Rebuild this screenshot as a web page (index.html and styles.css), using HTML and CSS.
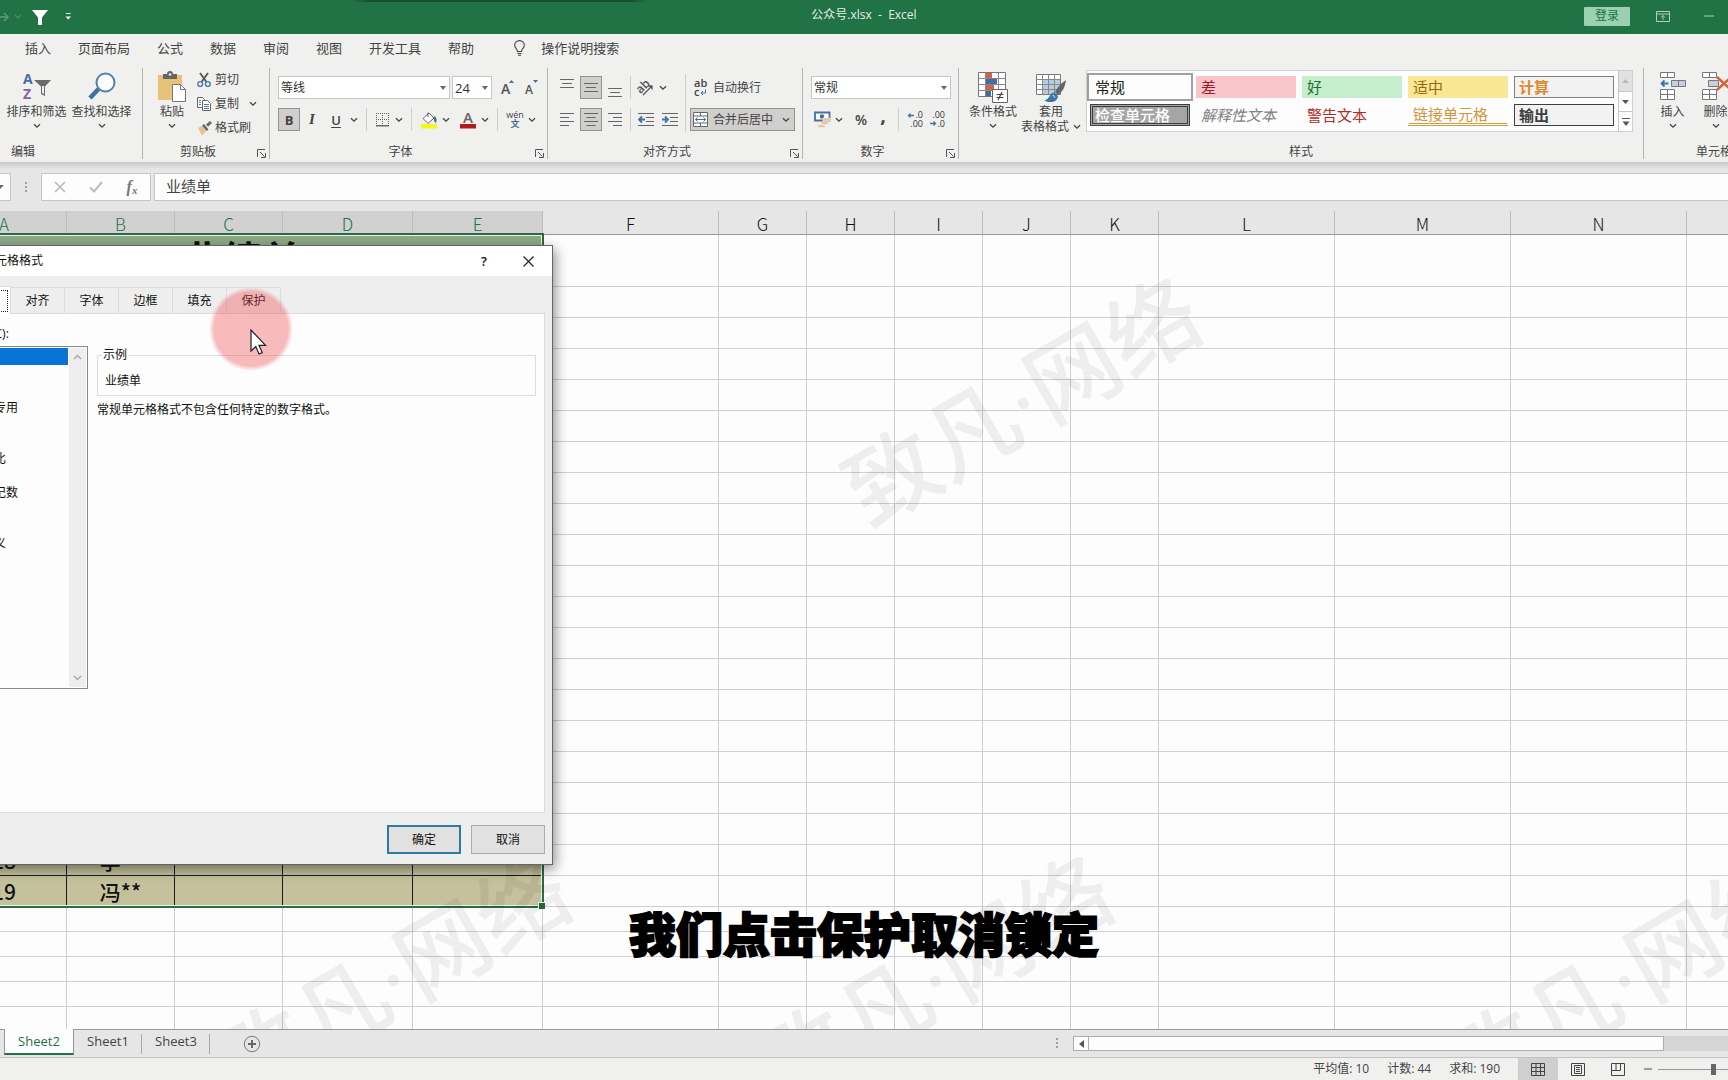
FILE: index.html
```html
<!DOCTYPE html>
<html lang="zh-CN">
<head>
<meta charset="utf-8">
<meta name="viewport" content="width=device-width, initial-scale=1">
<title>公众号.xlsx - Excel</title>
<link rel="stylesheet" href="styles.css">
</head>
<body>
<svg class="defs" aria-hidden="true">
  <symbol id="chev" viewBox="0 0 8 6"><path d="M1 1.2 4 4.2 7 1.2" fill="none" stroke="#444" stroke-width="1.3"/></symbol>
  <symbol id="launch" viewBox="0 0 9 9"><path d="M.5 8V.5H8M3 3l4.500 4.500M8.500 4v4.500H4" fill="none" stroke="#555"/></symbol>
</svg>

<header class="titlebar">
  <div class="quick">
    <button class="redo" aria-label="恢复"><svg width="9" height="10"><path d="M0 5h7M4 1l4 4-4 4" fill="none" stroke="#5d9a79" stroke-width="1.500"/></svg></button>
    <button class="redo-more" aria-label="恢复选项"><svg width="8" height="6"><path d="M1 1l3 3 3-3" fill="none" stroke="#4b8c69" stroke-width="1.300"/></svg></button>
    <button class="funnel" aria-label="筛选"><svg width="16" height="15"><path d="M0 0h16L10 7.500V15H6V7.500z" fill="#fff"/></svg></button>
    <button class="custom" aria-label="自定义快速访问工具栏"><svg width="7" height="8"><path d="M1 .5h4.500" stroke="#fff"/><path d="M.5 3.500h5.500L3.200 6.500z" fill="#fff"/></svg></button>
  </div>
  <h1 class="doc-title">公众号.xlsx&nbsp; -&nbsp; Excel</h1>
  <div class="window-tools">
    <button class="login">登录</button>
    <button class="win-btn" aria-label="功能区显示选项"><svg width="14" height="11"><path d="M.5.5h13v10H.5zM.5 3h13M7 9V4.500M5 6.500l2-2 2 2" fill="none" stroke="#a9d3ba"/></svg></button>
    <button class="win-btn" aria-label="最小化"><svg width="10" height="2"><path d="M0 1h10" stroke="#a9d3ba"/></svg></button>
  </div>
</header>

<nav class="tabs">
  <a href="#">插入</a><a href="#">页面布局</a><a href="#">公式</a><a href="#">数据</a><a href="#">审阅</a><a href="#">视图</a><a href="#">开发工具</a><a href="#">帮助</a>
  <a href="#" class="tell-me"><svg width="11" height="16"><path d="M3.500 11.500C3.500 9 .7 8.300.7 5.200a4.800 4.600 0 0 1 9.600 0c0 3.100-2.800 3.800-2.800 6.300zM3.500 13.500h4M4 15.300h3" fill="none" stroke="#444" stroke-width="1.100"/></svg>操作说明搜索</a>
</nav>

<section class="ribbon" aria-label="功能区">
  <div class="group g-edit">
    <div class="tools">
      <button class="big wide">
        <svg width="30" height="30"><text x="1" y="12" font-size="14" font-weight="700" fill="#44709c">A</text><text x="1" y="27" font-size="14" font-weight="700" fill="#8a5fa5">Z</text><path d="M12 8h17l-6.500 7v7.500h-3V15z" fill="#6b6b6b"/><path d="M20 14v7l2 1v-8" fill="#f0f1ef"/><path d="M19.500 14.500v7l3 2v-9" fill="none" stroke="#6b6b6b"/></svg>
        <span>排序和筛选</span><svg class="chev"><use href="#chev"/></svg>
      </button>
      <button class="big wide">
        <svg width="30" height="30"><path d="M11.500 17 3 26" stroke="#44709c" stroke-width="4.500"/><circle cx="18.500" cy="10.500" r="9" fill="#fdfdfd" stroke="#5580a8" stroke-width="2"/></svg>
        <span>查找和选择</span><svg class="chev"><use href="#chev"/></svg>
      </button>
    </div>
    <footer><span>编辑</span></footer>
  </div>

  <div class="group g-clip">
    <div class="tools">
      <button class="big paste">
        <svg width="30" height="32"><path d="M1 3h24v25H1z" fill="#e8c27b"/><path d="M6 2h4a3 3 0 0 1 6 0h4v5H6z" fill="#666"/><circle cx="13" cy="2.500" r="1.300" fill="#f0f1ef"/><path d="M15.500 12.500h8l5 5v12h-13z" fill="#fff" stroke="#777"/><path d="M23.500 12.500v5h5" fill="none" stroke="#777"/></svg>
        <span>粘贴</span><svg class="chev"><use href="#chev"/></svg>
      </button>
      <div class="stack">
        <button><svg width="16" height="16"><path d="M4 1l6.500 9M12 1 5.500 10" stroke="#555" stroke-width="1.800"/><circle cx="4.200" cy="12" r="2.400" fill="none" stroke="#4a78a8" stroke-width="1.400"/><circle cx="11.800" cy="12" r="2.400" fill="none" stroke="#4a78a8" stroke-width="1.400"/></svg>剪切</button>
        <button><svg width="16" height="16"><path d="M1.500 1.500h5l2 2v8h-7z" fill="#fff" stroke="#666"/><path d="M6.500 4.500h5l3 3v7h-8z" fill="#fff" stroke="#666"/><path d="M3 4.500h2M3 6.500h2M3 8.500h2M8 8.500h5M8 10.500h5M8 12.500h5" stroke="#4a78a8"/></svg>复制<svg class="chev"><use href="#chev"/></svg></button>
        <button><svg width="16" height="16"><path d="M2 8l4-2 4 5-4 4.500z" fill="#ecc088"/><path d="M6 5.500 8 4l4.500 5.500-2 1.500zM10 4.500l4-3.500 2 2-4 3.800z" fill="#666"/></svg>格式刷</button>
      </div>
    </div>
    <footer><span>剪贴板</span><button class="launch" aria-label="剪贴板设置"><svg width="9" height="9"><use href="#launch"/></svg></button></footer>
  </div>

  <div class="group g-font">
    <div class="rows">
      <div class="row">
        <span class="combo family"><select aria-label="字体"><option>等线</option></select></span>
        <span class="combo size"><select aria-label="字号"><option>24</option></select></span>
        <button class="ib grow" aria-label="增大字号"><svg width="16" height="18"><text x="2" y="15" font-size="14" font-weight="600" fill="#555">A</text><path d="M10 4l2.500-3L15 4z" fill="#44709c"/></svg></button>
        <button class="ib" aria-label="减小字号"><svg width="16" height="18"><text x="2" y="15" font-size="12" font-weight="600" fill="#555">A</text><path d="M10 1h5l-2.500 3z" fill="#44709c"/></svg></button>
      </div>
      <div class="row">
        <button class="ib on bold">B</button><button class="ib w24 italic">I</button><button class="ib w24 under">U</button><button class="dd" aria-label="下划线选项"><svg class="chev"><use href="#chev"/></svg></button>
        <i class="sep"></i>
        <button class="ib w20" aria-label="边框"><svg width="14" height="14"><path d="M0 .5h13M0 6.500h13M.5 0v13M6.500 0v13M12.500 0v13" stroke="#666" stroke-dasharray="1 1"/><path d="M0 12.800h13" stroke="#555" stroke-width="1.300"/></svg></button><button class="dd" aria-label="边框选项"><svg class="chev"><use href="#chev"/></svg></button>
        <i class="sep"></i>
        <button class="ib" aria-label="填充颜色"><svg width="17" height="18"><path d="M2 7.500 8 2l5 5-6 5.500z" fill="#fff" stroke="#666"/><path d="M7 6V1.500" stroke="#666"/><path d="M13 5c3 1.500 3 4 2 7-2-1-2.500-3-2-7z" fill="#44709c"/><path d="M0 13h16v4.500H0z" fill="#f7f51e"/></svg></button><button class="dd" aria-label="填充颜色选项"><svg class="chev"><use href="#chev"/></svg></button>
        <button class="ib color" aria-label="字体颜色"><svg width="16" height="18"><text x="3" y="11.500" font-size="15" font-weight="600" fill="#666">A</text><path d="M0 13h16v4.500H0z" fill="#b4191e"/></svg></button><button class="dd" aria-label="字体颜色选项"><svg class="chev"><use href="#chev"/></svg></button>
        <i class="sep"></i>
        <button class="ib" aria-label="拼音"><svg width="18" height="20"><text x="9" y="8" font-size="9" text-anchor="middle" fill="#444">wén</text><text x="9" y="17" font-size="9" font-weight="700" text-anchor="middle" fill="#44709c">文</text></svg></button><button class="dd" aria-label="拼音选项"><svg class="chev"><use href="#chev"/></svg></button>
      </div>
    </div>
    <footer><span>字体</span><button class="launch" aria-label="字体设置"><svg width="9" height="9"><use href="#launch"/></svg></button></footer>
  </div>

  <div class="group g-align">
    <div class="cols">
      <div class="rows">
        <div class="row gap2">
          <button class="ib" aria-label="顶端对齐"><svg width="14" height="20"><path d="M0 1.500h14M2 5.500h10M0 9.500h14" stroke="#666"/></svg></button>
          <button class="ib on" aria-label="垂直居中"><svg width="14" height="20"><path d="M0 5.500h14M2 9.500h10M0 13.500h14" stroke="#666"/></svg></button>
          <button class="ib" aria-label="底端对齐"><svg width="14" height="20"><path d="M0 10.500h14M2 14.500h10M0 18.500h14" stroke="#666"/></svg></button>
          <i class="sep tight"></i>
          <button class="ib" aria-label="方向"><svg width="18" height="18"><text x="0" y="11" font-size="12" font-weight="600" fill="#555" transform="rotate(-45 7 9)">ab</text><path d="M6 16 15 7M11.500 7H15v3.500" fill="none" stroke="#555" stroke-width="1.300"/></svg></button><button class="dd snug" aria-label="方向选项"><svg class="chev"><use href="#chev"/></svg></button>
        </div>
        <div class="row gap2">
          <button class="ib" aria-label="左对齐"><svg width="14" height="14"><path d="M0 .5h14M0 4.500h9M0 8.500h14M0 12.500h9" stroke="#666"/></svg></button>
          <button class="ib on" aria-label="居中"><svg width="14" height="14"><path d="M0 .5h14M2.500 4.500h9M0 8.500h14M2.500 12.500h9" stroke="#666"/></svg></button>
          <button class="ib" aria-label="右对齐"><svg width="14" height="14"><path d="M0 .5h14M5 4.500h9M0 8.500h14M5 12.500h9" stroke="#666"/></svg></button>
          <i class="sep tight"></i>
          <button class="ib" aria-label="减少缩进量"><svg width="16" height="14"><path d="M0 .5h16M8 4.500h8M8 8.500h8M0 12.500h16" stroke="#666"/><path d="M7 6.500H1.500M4 3.500l-3 3 3 3" fill="none" stroke="#3f74a6" stroke-width="1.800"/></svg></button>
          <button class="ib" aria-label="增加缩进量"><svg width="16" height="14"><path d="M0 .5h16M8 4.500h8M8 8.500h8M0 12.500h16" stroke="#666"/><path d="M0 6.500h5.500M3 3.500l3 3-3 3" fill="none" stroke="#3f74a6" stroke-width="1.800"/></svg></button>
        </div>
      </div>
      <i class="sep tall"></i>
      <div class="rows">
        <button class="labeled"><svg width="15" height="18"><text x="1" y="8" font-size="11" font-weight="600" fill="#444">ab</text><text x="1" y="17" font-size="11" font-weight="600" fill="#444">c</text><path d="M12.500 10.500V14H8M10 12l-2 2 2 2" fill="none" stroke="#44709c"/></svg>自动换行</button>
        <button class="labeled on"><svg width="15" height="15"><path d="M.5.5h14v14H.5z" fill="#fff" stroke="#666"/><path d="M.5 4h14M.5 11h14M7.500.5V4M7.500 11v3.500" stroke="#666"/><path d="M2.500 7.500h10M4.500 5.500l-2 2 2 2M10.500 5.500l2 2-2 2" fill="none" stroke="#44709c"/></svg>合并后居中<svg class="chev"><use href="#chev"/></svg></button>
      </div>
    </div>
    <footer><span>对齐方式</span><button class="launch" aria-label="对齐设置"><svg width="9" height="9"><use href="#launch"/></svg></button></footer>
  </div>

  <div class="group g-num">
    <div class="rows">
      <div class="row"><span class="combo numfmt"><select aria-label="数字格式"><option>常规</option></select></span></div>
      <div class="row">
        <button class="ib" aria-label="会计数字格式"><svg width="17" height="17"><path d="M1 1.500h14.500v8H1z" fill="#fff" stroke="#44709c" stroke-width="1.800"/><circle cx="8" cy="5.500" r="2.200" fill="#44709c"/><path d="M9 7h7v3H9zM7 11h7v2.500H7zM4 14h7v2.500H4z" fill="#ecc088" stroke="#f0f1ef" stroke-width=".6"/></svg></button><button class="dd" aria-label="会计格式选项"><svg class="chev"><use href="#chev"/></svg></button>
        <button class="ib pct color">%</button><button class="ib comma">,</button>
        <i class="sep tight"></i>
        <button class="ib" aria-label="增加小数位数"><svg width="18" height="18"><text x="17" y="7" font-size="9" text-anchor="end" fill="#333">.0</text><text x="17" y="16" font-size="9" text-anchor="end" fill="#333">.00</text><path d="M8 4.500H2.500M4.500 2.500l-2 2 2 2" fill="none" stroke="#3f74a6" stroke-width="1.300"/></svg></button>
        <button class="ib" aria-label="减少小数位数"><svg width="18" height="18"><text x="17" y="7" font-size="9" text-anchor="end" fill="#333">.00</text><text x="17" y="16" font-size="9" text-anchor="end" fill="#333">.0</text><path d="M2 12.500h5.500M5.500 10.500l2 2-2 2" fill="none" stroke="#3f74a6" stroke-width="1.300"/></svg></button>
      </div>
    </div>
    <footer><span>数字</span><button class="launch" aria-label="数字设置"><svg width="9" height="9"><use href="#launch"/></svg></button></footer>
  </div>

  <div class="group g-style">
    <div class="tools">
      <button class="big cond">
        <svg width="30" height="31"><path d="M.5.5h27v24H.5z" fill="#fff" stroke="#777"/><path d="M8 1h6v5H8zM8 13h8v5H8z" fill="#d0604f"/><path d="M8 7h11v5H8zM8 19h5v5H8z" fill="#3f6fa0"/><path d="M.5 6.500h27M.5 12.500h27M.5 18.500h27M7.500.5v24M20.500.5v24" stroke="#888"/><path d="M14.500 17.500h15v13h-15z" fill="#fff" stroke="#666"/><path d="M18.500 22.500h7M18.500 25.500h7M24 20l-4 8" stroke="#444" stroke-width="1.200"/></svg>
        <span>条件格式</span><svg class="chev"><use href="#chev"/></svg>
      </button>
      <button class="big fmt">
        <svg width="30" height="31"><path d="M.5 2.500h24v20H.5z" fill="#fff" stroke="#777"/><path d="M7 8h17v14H7z" fill="#b6cbe0"/><path d="M.5 7.500h24M.5 12.500h24M.5 17.500h24M6.500 2.500v20M12.500 2.500v20M18.500 2.500v20" stroke="#888"/><path d="M30 8c-6 4-9 8-11 12l3 3c4-3 7-7 8-15z" fill="#666"/><path d="M18.500 20.500c-5 0-4 6-10 8 5 3 13 2 13.500-4.500z" fill="#3f74a6"/><path d="M17 23l2 2.500" stroke="#fff"/></svg>
        <span>套用</span><span class="line2">表格格式<svg class="chev"><use href="#chev"/></svg></span>
      </button>
      <div class="gallery">
        <div class="swatches">
          <button class="sw normal">常规</button><button class="sw bad">差</button><button class="sw good">好</button><button class="sw neutral">适中</button><button class="sw calc">计算</button>
          <button class="sw check">检查单元格</button><button class="sw explain">解释性文本</button><button class="sw warn">警告文本</button><button class="sw linked">链接单元格</button><button class="sw output">输出</button>
        </div>
        <div class="gscroll">
          <button disabled aria-label="上一行"><svg width="7" height="4"><path d="M0 4l3.500-4L7 4z" fill="#bbb"/></svg></button>
          <button aria-label="下一行"><svg width="7" height="4"><path d="M0 0h7L3.500 4z" fill="#555"/></svg></button>
          <button aria-label="其他样式"><svg width="8" height="8"><path d="M0 .5h8" stroke="#555"/><path d="M.5 3.500h7L4 8z" fill="#555"/></svg></button>
        </div>
      </div>
    </div>
    <footer><span>样式</span></footer>
  </div>

  <div class="group g-cells">
    <div class="tools">
      <button class="big cell">
        <svg width="28" height="29"><path d="M1.500.5h14v5h-14zM8.500.5v5M1.500 17.500h14v10h-14zM1.500 22.500h14M8.500 17.500v10" fill="#fff" stroke="#777"/><path d="M12.500 8.500h14v6h-14zM19.500 8.500v6" fill="#c3d0de" stroke="#777"/><path d="M9.500 11.500H3M5.500 8.500l-3 3 3 3" fill="none" stroke="#3f74a6" stroke-width="1.800"/></svg>
        <span>插入</span><svg class="chev"><use href="#chev"/></svg>
      </button>
      <button class="big cell">
        <svg width="30" height="29"><path d="M1.500.5h14v5h-14zM8.500.5v5M1.500 17.500h14v10h-14zM1.500 22.500h14M8.500 17.500v10" fill="#fff" stroke="#777"/><path d="M7.500 8.500h10v6h-10z" fill="#c3d0de" stroke="#777"/><path d="M16 5l14 13M30 5 16 18" stroke="#d8603c" stroke-width="2.400"/></svg>
        <span>删除</span><svg class="chev"><use href="#chev"/></svg>
      </button>
    </div>
    <footer><span>单元格</span></footer>
  </div>
</section>

<section class="formula-bar">
  <button class="namebox" aria-label="名称框列表"><svg width="7" height="5"><path d="M0 0h7L3 4z" fill="#666"/></svg></button>
  <i class="grip"></i>
  <div class="fbtns">
    <button aria-label="取消"><svg width="12" height="12"><path d="M1 1l10 10M11 1 1 11" stroke="#bbb" stroke-width="1.700"/></svg></button>
    <button aria-label="输入"><svg width="14" height="12"><path d="M1 6.500 5 10.500 13 1" fill="none" stroke="#bbb" stroke-width="2"/></svg></button>
    <button class="fx" aria-label="插入函数">f<sub>x</sub></button>
  </div>
  <input class="formula" aria-label="编辑栏" value="业绩单">
</section>

<main class="sheet">
  <table class="grid">
    <colgroup><col class="c-a"><col class="c-b"><col class="c-b"><col class="c-d"><col class="c-d"><col class="c-w"><col class="c-n"><col class="c-n"><col class="c-n"><col class="c-n"><col class="c-n"><col class="c-w"><col class="c-w"><col class="c-w"><col></colgroup>
    <thead><tr id="heads"></tr></thead>
    <tbody id="cells"></tbody>
  </table>
  <div class="selection"><i class="handle"></i></div>
  <div class="mark m1">致凡·网络</div>
  <div class="mark m2">致凡·网络</div>
  <div class="mark m3">致凡·网络</div>
  <div class="mark m4">致凡·网络</div>
</main>

<section class="sheetbar">
  <nav class="sheet-tabs">
    <a href="#" class="active">Sheet2</a><a href="#">Sheet1</a><a href="#">Sheet3</a>
    <button class="add" aria-label="新工作表"><svg width="18" height="18"><circle cx="9" cy="9" r="7.700" fill="none" stroke="#777"/><path d="M5 9h8M9 5v8" stroke="#666" stroke-width="2"/></svg></button>
  </nav>
  <i class="grip"></i>
  <div class="hscroll">
    <button aria-label="向左滚动"><svg width="5" height="8"><path d="M5 0v8L0 4z" fill="#555"/></svg></button>
    <div class="thumb"></div>
  </div>
</section>

<footer class="status">
  <span>平均值: 10</span><span>计数: 44</span><span>求和: 190</span>
  <div class="views">
    <button class="on" aria-label="普通"><svg width="14" height="13"><path d="M.5.5h13v12H.5zM.5 4.500h13M.5 8.500h13M5 .5v12M9.500.5v12" fill="none" stroke="#444"/></svg></button>
    <button aria-label="页面布局"><svg width="14" height="13"><path d="M.5.500h13v12H.5zM3.500 2.500h7v8h-7zM5 4.500h4M5 6.500h4M5 8.500h4" fill="none" stroke="#444"/></svg></button>
    <button aria-label="分页预览"><svg width="14" height="13"><path d="M.5.500h13v12H.5zM.5 7.500h9v-7M5 .5v7" fill="none" stroke="#444"/></svg></button>
  </div>
  <button class="minus" aria-label="缩小"><svg width="8" height="2"><path d="M0 1h8" stroke="#444"/></svg></button>
  <div class="zoom"><i class="knob"></i></div>
</footer>

<div class="dialog" role="dialog" aria-labelledby="dlg-title">
  <header>
    <h2 id="dlg-title">设置单元格格式</h2>
    <button class="help" aria-label="帮助">?</button>
    <button class="close" aria-label="关闭"><svg width="11" height="11"><path d="M.5.500l10 10M10.500.500l-10 10" stroke="#222" stroke-width="1.200"/></svg></button>
  </header>
  <div class="dbody">
    <div class="dtabs" role="tablist">
      <button role="tab" class="sel"><span>数字</span></button><button role="tab">对齐</button><button role="tab">字体</button><button role="tab">边框</button><button role="tab">填充</button><button role="tab">保护</button>
    </div>
    <div class="panel">
      <div class="cat">
        <span id="cat-label">分类(C):</span>
        <div class="listbox">
          <ul role="listbox" aria-labelledby="cat-label">
            <li role="option" aria-selected="true" class="sel">常规</li><li role="option">数值</li><li role="option">货币</li><li role="option">会计专用</li><li role="option">日期</li><li role="option">时间</li><li role="option">百分比</li><li role="option">分数</li><li role="option">科学记数</li><li role="option">文本</li><li role="option">特殊</li><li role="option">自定义</li>
          </ul>
          <div class="vscroll"><svg width="9" height="6"><path d="M1 5l3.500-3.500L8 5" fill="none" stroke="#aaa" stroke-width="1.500"/></svg><svg width="9" height="6"><path d="M1 1l3.500 3.500L8 1" fill="none" stroke="#aaa" stroke-width="1.500"/></svg></div>
        </div>
      </div>
      <div class="detail">
        <fieldset><legend>示例</legend>业绩单</fieldset>
        <p>常规单元格格式不包含任何特定的数字格式。</p>
      </div>
    </div>
    <div class="actions"><button class="ok">确定</button><button>取消</button></div>
  </div>
</div>

<div class="spot"></div>
<svg class="cursor" width="18" height="27" viewBox="0 0 18 27"><path d="M1 1v21l4.800-4.500L9 25l3.200-1.400L9 16.300h6.500z" fill="#fff" stroke="#222" stroke-width="1.200"/></svg>
<p class="caption">我们点击保护取消锁定</p>
<script src="sheet.js"></script>
</body>
</html>
```
FILE: styles.css
```css
* { box-sizing: border-box; }
body {
  margin: 0; height: 100vh; display: flex; flex-direction: column; overflow: hidden; position: relative;
  font: 12px/16px "Open Sans", "Noto Sans CJK SC", sans-serif; color: #444; background: #e6e6e6;
}
button { border: 0; padding: 0; margin: 0; background: none; font: inherit; color: inherit; display: flex; align-items: center; justify-content: center; flex: none; white-space: nowrap; }
a { color: inherit; text-decoration: none; }
svg { flex: none; display: block; overflow: visible; }
svg text { font-family: "Open Sans", "Noto Sans CJK SC", sans-serif; }
i { font-style: normal; flex: none; }
h1, h2, p, ul { margin: 0; padding: 0; font: inherit; list-style: none; }
.defs { position: absolute; width: 0; height: 0; }
.chev { width: 8px; height: 6px; }

/* title bar */
.titlebar {
  flex: none; height: 34px; display: grid; grid-template-columns: 1fr auto 1fr; align-items: center; color: #e3efe8;
  background: linear-gradient(90deg, transparent 350px, #17502f 370px, #17502f 630px, transparent 648px) 0 0 / 100% 2px no-repeat, #217245;
}
.quick { display: flex; align-items: center; }
.redo-more { margin-left: 5px; }
.funnel { margin-left: 10px; }
.custom { margin-left: 17px; }
.doc-title { font-size: 12px; padding-bottom: 4px; }
.window-tools { display: flex; justify-content: flex-end; align-items: center; padding: 0 14px 2px 0; }
.login { width: 46px; height: 19px; background: #9bd0b0; color: #217245; border-radius: 1px; margin-right: 26px; }
.win-btn + .win-btn { margin-left: 34px; }

/* ribbon tabs */
.tabs { flex: none; height: 32px; display: flex; align-items: center; gap: 27px; padding: 0 0 4px 25px; background: #f0f1ef; font-size: 13px; }
.tell-me { display: flex; align-items: center; gap: 16px; margin-left: 13px; }

/* ribbon */
.ribbon { flex: none; height: 96px; display: flex; padding: 2px 0 3px; background: #f0f1ef; overflow: hidden; }
.group { flex: none; display: flex; flex-direction: column; justify-content: space-between; border-right: 1px solid #b4b4b4; }
.group footer { display: flex; align-items: center; line-height: 14px; }
.group footer span { flex: 1; text-align: center; }
.launch { width: 16px; height: 11px; align-self: flex-end; }
.tools { display: flex; align-items: flex-start; }
.rows { display: flex; flex-direction: column; gap: 9px; padding-top: 8px; }
.cols { display: flex; }
.row { display: flex; height: 23px; align-items: center; }
.gap2 { gap: 2px; }
.big { flex-direction: column; justify-content: flex-start; padding-top: 4px; line-height: 15px; }
.big > svg:first-child { height: 32px; }
.big > .chev { margin-top: 4px; }
.line2 { display: flex; align-items: center; gap: 4px; }
.wide { width: 65px; }
.paste { width: 42px; }
.cond { width: 52px; }
.fmt { width: 64px; }
.cell { width: 43px; }
.g-edit { width: 143px; padding-left: 4px; }
.g-edit footer span { text-align: left; padding-left: 7px; }
.g-clip { width: 127px; }
.g-clip .tools { padding-left: 8px; }
.g-font { width: 278px; }
.g-font .rows, .g-num .rows { padding-left: 8px; }
.g-align { width: 255px; }
.g-align .cols { padding-left: 8px; }
.g-num { width: 156px; }
.g-style { width: 685px; }
.g-style .tools { padding-left: 8px; }
.g-cells { width: 140px; border: 0; }
.g-cells .tools { padding-left: 7px; }
.stack { padding-left: 3px; }
.stack button { height: 24px; gap: 3px; }
.stack .chev { margin-left: 7px; }
.combo { position: relative; display: block; height: 23px; }
.combo select { appearance: none; width: 100%; height: 100%; margin: 0; padding: 0 0 0 2px; border: 1px solid #c6c6c6; border-radius: 0; background: #fff; font: inherit; font-size: 12px; color: #333; }
.combo::after { content: ""; position: absolute; right: 4px; top: 10px; border: 3px solid transparent; border-top: 4px solid #666; border-bottom: 0; }
.family { width: 172px; margin-right: 2px; }
.size { width: 40px; }
.size select { font-size: 13px; }
.numfmt { width: 140px; }
.ib { width: 22px; height: 23px; }
.w24 { width: 24px; }
.w20 { width: 20px; }
.grow { margin: 0 2px 0 4px; }
.color { margin-left: 5px; }
.on { background: #d0cfce; border: 1px solid #929292; }
.bold { font-weight: 700; font-size: 13px; }
.italic { font: italic 600 15px "Liberation Serif", serif; }
.under { font-weight: 600; font-size: 13px; text-decoration: underline; text-underline-offset: 2px; }
.pct { font-size: 14px; font-weight: 600; }
.comma { font-size: 20px; font-weight: 700; padding-bottom: 10px; }
.dd { width: 12px; height: 23px; }
.snug { margin-left: -2px; }
.sep { width: 1px; height: 23px; margin: 0 6px; background: #cfcfcf; }
.sep.tight { margin: 0 2px; }
.g-num .tight { margin: 0 5px 0 4px; }
.sep.tall { height: 58px; margin: 6px 4px 0; }
.labeled { height: 23px; width: 105px; justify-content: flex-start; gap: 5px; padding: 0 4px 0 2px; border: 1px solid transparent; }
.labeled.on { border-color: #929292; }
.labeled .chev { margin-left: 4px; }

.gallery { display: flex; margin: 2px 0 0 3px; height: 62px; border: 1px solid #cfcfcf; background: #fdfdfd; }
.swatches { display: grid; grid-template-columns: repeat(5, 100px); align-content: start; gap: 6px; padding: 5px 4px 5px 3px; }
.sw { height: 22px; justify-content: flex-start; padding-left: 4px; font-size: 15px; color: #222; border: 1px solid transparent; }
.normal { outline: 2px solid #a0a0a0; outline-offset: 1px; }
.bad { background: #f8c5cb; color: #9c1b26; }
.good { background: #c5eecd; color: #276b30; }
.neutral { background: #fae794; color: #95680f; }
.calc { background: #f2f2f2; border-color: #7f7f7f; color: #dd8a2f; font-weight: 700; }
.check { background: #a5a5a5; border: 3px double #3f3f3f; color: #fff; font-weight: 500; padding-left: 2px; }
.explain { color: #808080; font-style: italic; }
.warn { color: #b32c28; }
.linked { color: #cf9541; border-bottom: 3px double #c9a035; }
.output { background: #f2f2f2; border-color: #3f3f3f; color: #3f3f3f; font-weight: 700; }
.gscroll { width: 14px; border-left: 1px solid #c6c6c6; display: grid; grid-template-rows: repeat(3, 1fr); }
.gscroll button + button { border-top: 1px solid #c6c6c6; }
.gscroll button:disabled { background: #e1e1e1; }

/* formula bar */
.formula-bar { flex: none; display: flex; align-items: center; padding: 11px 0 10px; background: linear-gradient(#c9cac5, #e6e6e6 7px); }
.namebox { width: 11px; height: 28px; border: 1px solid #c6c6c6; border-left: 0; background: #fdfdfd; justify-content: flex-start; }
.namebox svg { margin-left: -3px; }
.grip { width: 2px; height: 11px; background: repeating-linear-gradient(#a0a0a0 0 2px, transparent 2px 4px); }
.formula-bar .grip { margin: 0 14px; }
.fbtns { display: flex; width: 110px; height: 28px; border: 1px solid #c6c6c6; background: #fdfdfd; }
.fbtns button { flex: 1; }
.fbtns .fx { font: italic 700 16px/20px "Liberation Serif", serif; color: #777; }
.fx sub { font-size: 11px; line-height: 10px; align-self: flex-end; padding-bottom: 5px; }
.formula { flex: 1; min-width: 0; height: 28px; margin: 0 0 0 3px; padding: 0 11px 3px; border: 1px solid #c6c6c6; border-right: 0; border-radius: 0; background: #fdfdfd; font: inherit; font-size: 15px; color: #444; }

/* worksheet */
.sheet { flex: 1; min-height: 0; position: relative; overflow: hidden; background: #fdfdfd; }
.grid { table-layout: fixed; border-collapse: separate; border-spacing: 0; width: calc(100% + 193px); margin-left: -58px; font-family: "Noto Sans CJK SC", sans-serif; color: #111; }
.c-a { width: 125px; } .c-b { width: 108px; } .c-d { width: 130px; } .c-w { width: 176px; } .c-n { width: 88px; }
.grid th { height: 24px; padding: 2px 0 0; font-size: 17px; line-height: 20px; font-weight: 300; background: #e6e6e6; border-right: 1px solid #bcbcbc; border-bottom: 1px solid #979797; }
.grid th.hit { background: #d1d1d1; color: #217245; }
.grid td { height: 31px; padding: 0; border-right: 1px solid #cfcfcf; border-bottom: 1px solid #cfcfcf; text-align: center; line-height: 24px; font-size: 21px; font-weight: 500; }
.grid .title { height: 52px; padding-bottom: 5px; background: #8cab88; font-size: 40px; font-weight: 700; line-height: 44px; }
.grid .data { background: #c5c19c; border-color: #1a1a1a; }
.grid .short td { height: 25px; }
.selection { position: absolute; left: -58px; top: 22px; width: 602px; height: 675px; border: 2px solid #2a6b41; box-shadow: inset 0 0 0 1px #eef3ea; }
.handle { position: absolute; right: -3px; bottom: -3px; width: 7px; height: 7px; background: #2a6b41; border: 1px solid #fff; border-width: 1px 0 0 1px; }
.mark { position: absolute; width: 420px; height: 100px; line-height: 100px; margin: -50px 0 0 -210px; text-align: center; white-space: nowrap; font-family: "Open Sans", "Noto Sans CJK SC", sans-serif; font-size: 92px; font-weight: 500; color: rgba(0, 0, 0, .06); transform: rotate(-30deg); }
.m1 { left: 1022px; top: 190px; }
.m2 { left: 934px; top: 768px; }
.m3 { left: 392px; top: 767px; }
.m4 { left: 1623px; top: 768px; }

/* sheet tabs */
.sheetbar { flex: none; height: 29px; display: flex; align-items: center; border-top: 1px solid #979797; border-bottom: 1px solid #c3c3c3; }
.sheet-tabs { flex: 1; display: flex; align-self: stretch; padding-left: 4px; font-size: 13px; line-height: 22px; }
.sheet-tabs a { width: 68px; height: 25px; text-align: center; }
.sheet-tabs .active { width: 70px; margin-top: -1px; height: 26px; line-height: 24px; background: #fdfdfd; color: #217245; border: solid #979797; border-width: 0 1px; border-bottom: 2px solid #217245; }
.sheet-tabs a:not(.active) { background: linear-gradient(#a8a8a8, #a8a8a8) 100% 4px / 1px 20px no-repeat; }
.add { margin-left: 33px; }
.hscroll { width: 655px; height: 15px; margin-left: 15px; display: flex; background: #d5d5d5; }
.hscroll button { width: 16px; border: 1px solid #adadad; background: #fdfdfd; }
.thumb { flex: 1; margin-right: 64px; background: #fdfdfd; border: 1px solid #adadad; border-left: 0; }

/* status bar */
.status { flex: none; height: 22px; display: flex; align-items: center; justify-content: flex-end; gap: 18px; background: #f0f1ef; }
.views { display: flex; }
.views button { width: 40px; height: 22px; }
.views .on { border: 0; background: #cfcfcf; }
.minus { margin-left: -12px; }
.zoom { width: 70px; height: 1px; margin-left: -12px; background: #999; position: relative; }
.knob { position: absolute; left: 53px; top: -5px; width: 5px; height: 11px; background: #666; }

/* format cells dialog */
.dialog { position: absolute; left: -49px; top: 245px; width: 602px; border: 1px solid #666; background: #eeeeee; color: #111; box-shadow: 2px 4px 12px rgba(0, 0, 0, .45); }
.dialog > header { display: flex; align-items: center; height: 30px; padding: 0 18px 0 7px; background: #fff; }
.dialog h2 { flex: 1; }
.help { font-size: 13px; font-weight: 600; margin-right: 36px; }
.dbody { padding: 9px 7px 10px; }
.dtabs { display: flex; align-items: flex-end; height: 28px; }
.dtabs button { width: 54px; height: 26px; border: 1px solid #dcdcdc; border-width: 1px 1px 0 0; }
.dtabs .sel { width: 52px; height: 28px; background: #fff; margin-bottom: -1px; }
.dtabs .sel span { border: 1px dotted #222; padding: 2px 10px; }
.panel { display: flex; gap: 9px; padding: 12px 8px 123px 7px; border: 1px solid #dcdcdc; background: #fdfdfd; }
.cat { width: 121px; }
.listbox { display: flex; height: 343px; margin-top: 4px; padding: 1px; border: 1px solid #828790; }
.listbox ul { flex: 1; line-height: 17px; }
.listbox li { padding-left: 1px; }
.listbox .sel { background: #0a74d6; color: #fff; }
.vscroll { width: 17px; margin-left: 1px; padding: 6px 0; display: flex; flex-direction: column; justify-content: space-between; align-items: center; background: #eee; }
.detail { flex: 1; padding-top: 21px; }
fieldset { margin: 0; padding: 10px 7px 6px; border: 1px solid #dcdcdc; }
legend { padding: 0 1px; margin-left: -3px; }
.detail p { margin-top: 6px; }
.actions { display: flex; justify-content: flex-end; gap: 10px; padding-top: 12px; }
.actions button { width: 74px; height: 29px; border: 1px solid #adadad; background: #e1e1e1; }
.actions .ok { border: 2px solid #2a7da0; }

/* pointer and caption over the recording */
.spot { position: absolute; left: 209px; top: 287px; width: 84px; height: 84px; border-radius: 50%; background: radial-gradient(closest-side, rgba(240, 70, 75, .37) 88%, transparent); }
.cursor { position: absolute; left: 250px; top: 329px; }
.caption { position: absolute; left: 0; right: 0; bottom: 120px; text-align: center; font: 900 47px/56px "Noto Sans CJK SC", sans-serif; color: #000; -webkit-text-stroke: 2px #000; }
```
FILE: sheet.js
```js
const letters = "ABCDEFGHIJKLMNO".split("");
const selectedCols = 5;
const names = { 18: "李**", 19: "冯**" };

document.getElementById("heads").innerHTML = letters
  .map((l, i) => `<th${i < selectedCols ? ' class="hit"' : ""}>${l}</th>`)
  .join("");

const blank = (n) => "<td></td>".repeat(n);
let rows = `<tr><td class="title" colspan="${selectedCols}">业绩单</td>${blank(10)}</tr>`;
for (let r = 0; r < 20; r++) {
  const name = names[r] || "";
  const no = name ? r : "";
  rows += `<tr><td class="data">${no}</td><td class="data">${name}</td>`
    + '<td class="data"></td>'.repeat(3) + blank(10) + "</tr>";
}
for (let r = 0; r < 5; r++) rows += `<tr class="short">${blank(15)}</tr>`;
document.getElementById("cells").innerHTML = rows;
```
